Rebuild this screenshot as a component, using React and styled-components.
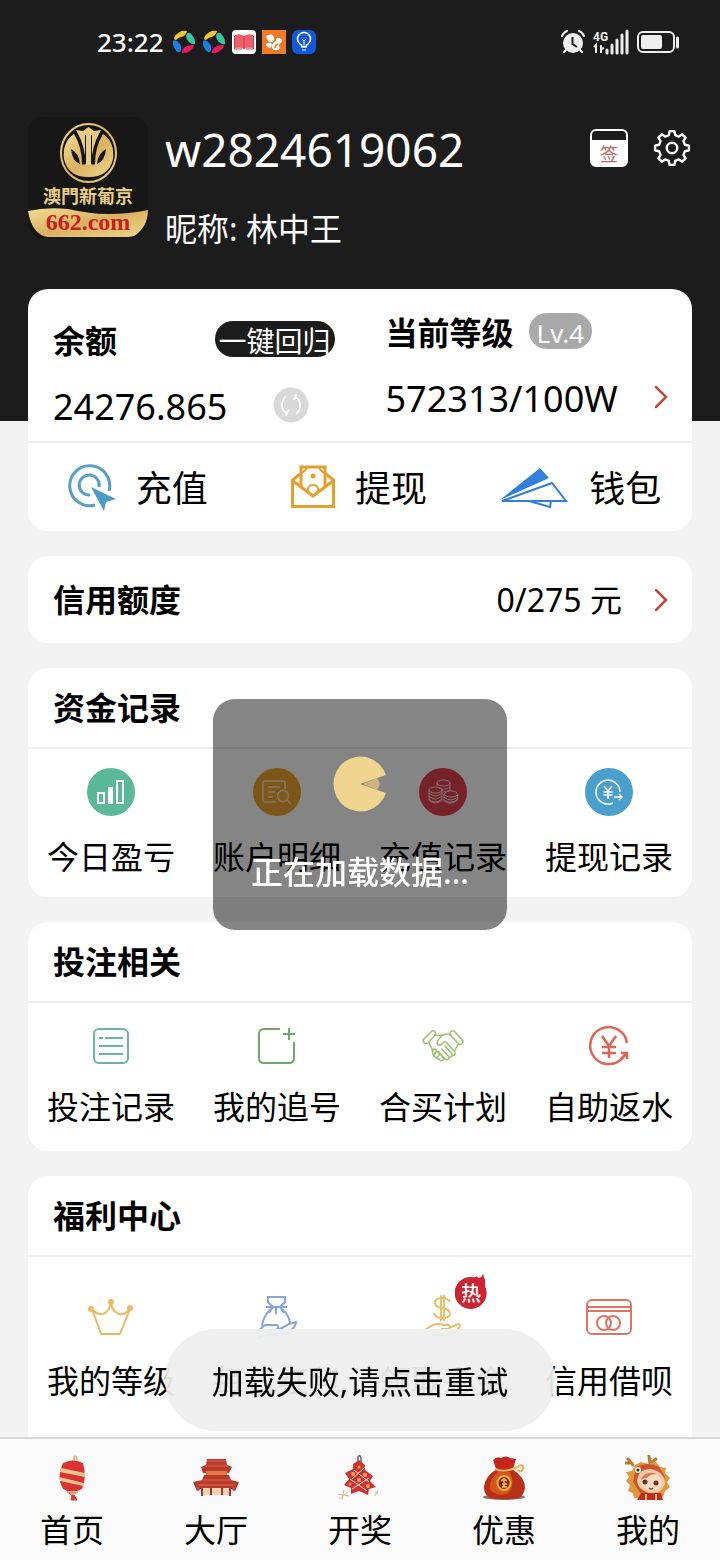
import React, { useState } from 'react';
import styled, { createGlobalStyle } from 'styled-components';

const GlobalStyle = createGlobalStyle`
  * {
    box-sizing: border-box;
  }

  body {
    margin: 0;
    background: #f3f3f3;
    color: #000;
    font-family: "Noto Sans", "Noto Sans CJK SC", sans-serif;
    font-size: 32px;
    line-height: 32px;
  }

  button {
    padding: 0;
    border: none;
    background: none;
    color: inherit;
    font: inherit;
    cursor: pointer;
  }

  a {
    color: inherit;
    text-decoration: none;
  }

  svg {
    display: block;
    flex: none;
  }
`;

const Screen = styled.div`
  display: flex;
  flex-direction: column;
  height: 100vh;
  overflow: hidden;
`;

const Header = styled.header`
  flex: none;
  padding-bottom: 176px;
  background: #1c1c1c;
  color: #fff;
`;

const StatusBar = styled.div`
  display: flex;
  justify-content: space-between;
  align-items: center;
  height: 84px;
  padding: 0 41px 0 97px;
`;

const StatusGroup = styled.div`
  display: flex;
  align-items: center;
  gap: ${(p) => p.$gap}px;
`;

const Clock = styled.time`
  margin-right: 2px;
  font-size: 26px;
  font-weight: 500;
`;

const Profile = styled.div`
  display: flex;
  align-items: flex-start;
  gap: 17px;
  padding: 33px 28px 0;
`;

const ProfileText = styled.div`
  flex: 1;
  min-width: 0;
  padding-top: 4px;
`;

const UserName = styled.h1`
  margin: 0 0 36px;
  font-size: 46px;
  font-weight: 400;
  line-height: 56px;
`;

const Nickname = styled.p`
  margin: 0;
`;

const HeaderTools = styled.div`
  display: flex;
  gap: 24px;
  padding-top: 12px;
`;

const SignButton = styled.button`
  width: 38px;
  height: 38px;
  padding-top: 12px;
  border: 2px solid #fff;
  border-radius: 6px;
  background: linear-gradient(#1c1c1c 9px, #fff 9px);
  color: #c0655a;
  font-size: 18px;
  line-height: 22px;
`;

const Main = styled.main`
  display: flex;
  flex: 1;
  flex-direction: column;
  gap: 25px;
  min-height: 0;
  margin-top: -132px;
  padding: 0 28px;
  overflow: hidden;
`;

const Card = styled.section`
  flex: none;
  border-radius: 20px;
  background: #fff;
`;

const Title = styled.h2`
  margin: 0;
  font-size: 32px;
  font-weight: 700;
`;

const Summary = styled.div`
  display: grid;
  grid-template-columns: minmax(0, 7fr) minmax(0, 6fr);
  height: 154px;
  border-bottom: 2px solid #eee;
`;

const BalanceColumn = styled.div`
  padding: 32px 51px 0 25px;
`;

const LevelColumn = styled.div`
  padding: 24px 24px 0 0;
`;

const SummaryRow = styled.div`
  display: flex;
  align-items: center;
  justify-content: ${(p) => (p.$start ? 'flex-start' : 'space-between')};
  gap: 15px;
  height: 36px;

  & + & {
    margin-top: 30px;
  }

  h2 {
    padding-top: 4px;
  }
`;

const Amount = styled.span`
  padding-top: 4px;
  font-size: 36px;
  line-height: 36px;
`;

const ReturnButton = styled.button`
  width: 120px;
  height: 36px;
  padding-top: 4px;
  border-radius: 18px;
  background: #1c1c1c;
  color: #fff;
  font-size: 28px;
  line-height: 32px;
  white-space: nowrap;
`;

const RefreshButton = styled.button`
  margin-right: 26px;
`;

const LevelBadge = styled.span`
  height: 36px;
  padding: 4px 8px 0;
  border-radius: 18px;
  background: #a9a9a9;
  color: #fff;
  font-size: 26px;
  line-height: 32px;
`;

const Actions = styled.div`
  display: grid;
  grid-template-columns: repeat(3, 1fr);
  height: 88px;
`;

const ActionButton = styled.button`
  display: flex;
  align-items: center;
  justify-content: center;
  gap: 20px;
  padding-right: 2px;
  font-size: 36px;
  line-height: 36px;

  span {
    padding-top: 4px;
  }
`;

const CreditRow = styled.a`
  display: flex;
  align-items: center;
  height: 87px;
  padding: 0 24px 0 25px;
`;

const CreditValue = styled.span`
  margin: 0 32px 0 auto;
`;

const CardHead = styled.div`
  display: flex;
  align-items: center;
  height: 81px;
  padding-left: 25px;
  border-bottom: 2px solid #eee;
`;

const CellGrid = styled.div`
  display: grid;
  grid-template-columns: repeat(4, 1fr);
`;

const Cell = styled.button`
  position: relative;
  display: flex;
  flex-direction: column;
  align-items: center;
  gap: ${(p) => p.$gap}px;
  padding: ${(p) => p.$top}px 0 ${(p) => p.$bottom}px;
  white-space: nowrap;
`;

const IconDisc = styled.span`
  display: grid;
  place-items: center;
  width: 48px;
  height: 48px;
  border-radius: 50%;
  background: ${(p) => p.$color};
`;

const HotBadge = styled.span`
  position: absolute;
  top: 17px;
  left: 95px;
  display: grid;
  justify-items: center;
  color: #fff;
  font-size: 20px;
  font-weight: 500;
  line-height: 20px;

  svg,
  span {
    grid-area: 1 / 1;
  }

  span {
    padding-top: 10px;
  }
`;

const TabBar = styled.nav`
  display: grid;
  flex: none;
  grid-template-columns: repeat(5, 1fr);
  height: 123px;
  border-top: 2px solid #d8d8d8;
  background: #fafafa;
`;

const Tab = styled.a`
  display: flex;
  flex-direction: column;
  align-items: center;
  gap: 13px;
  padding-top: 16px;
`;

const LoadingLayer = styled.div`
  position: fixed;
  inset: 0;
  display: flex;
  align-items: center;
  justify-content: center;
  padding-top: 69px;
  pointer-events: none;
`;

const LoadingBox = styled.div`
  display: flex;
  flex-direction: column;
  align-items: center;
  gap: 44px;
  width: 294px;
  height: 231px;
  padding-top: 57px;
  border-radius: 22px;
  background: rgba(0, 0, 0, 0.48);
  color: #fff;
  font-weight: 500;
  white-space: nowrap;
`;

const ToastLayer = styled.div`
  position: fixed;
  right: 0;
  bottom: 129px;
  left: 0;
  display: flex;
  justify-content: center;
`;

const Toast = styled.button`
  height: 102px;
  padding: 4px 47px 0;
  border-radius: 51px;
  background: rgba(238, 238, 238, 0.94);
  white-space: nowrap;
`;

/* ---- status bar icons ---- */

const Swirl = () => (
  <svg width="24" height="24" viewBox="0 0 24 24">
    <path d="M2 8 A11.500 11.500 0 0 1 15 1 Q14 6 9 7 Q6 8 4 10 Q2 10 2 8Z" fill="#f5c52c" />
    <path d="M16 3 Q18 2 20 5 A11.500 11.500 0 0 1 23 14 Q20 15 17 12 Q14 9 14 6 Q14 4 16 3Z" fill="#3cc79a" />
    <path d="M22 16 A11.500 11.500 0 0 1 10 23 Q9 20 13 17 Q17 15 20 15 Q22 15 22 16Z" fill="#ea1a5c" />
    <path d="M1 11 Q4 9 7 13 Q10 16 9 20 Q8 23 6 22 A11.500 11.500 0 0 1 1 11Z" fill="#1b7fe6" />
  </svg>
);

const BookIcon = () => (
  <svg width="24" height="24" viewBox="0 0 24 24">
    <rect width="24" height="24" rx="4" fill="#fff" />
    <path d="M3 5 Q8 3 12 6 Q16 3 21 5 L21 18 Q15 17 12 19 Q9 17 3 18Z" fill="#f0606a" />
    <path d="M12 6 V19 M2.500 6 V19 H10 M21.500 6 V19 H14" fill="none" stroke="#b8434f" strokeWidth="1" />
  </svg>
);

const SquirrelIcon = () => (
  <svg width="24" height="24" viewBox="0 0 24 24">
    <rect width="24" height="24" fill="#f07a26" />
    <path d="M5 9 Q3 5 7 5 Q11 3 12 8 Q13 11 10 12 Q6 12 5 9Z" fill="#fff" />
    <path d="M11 20 Q8 14 14 11 Q14 7 17 8 Q21 9 20 12 Q17 13 17 15 Q18 18 17 20Z" fill="#fff" />
    <path d="M4 14 Q7 11 10 14 Q10 17 8 18 Q4 17 4 14Z" fill="#fff" />
    <path d="M13 18 Q13 15 16 14" fill="none" stroke="#f07a26" strokeWidth="1.500" />
  </svg>
);

const BulbIcon = () => (
  <svg width="24" height="24" viewBox="0 0 24 24" fill="none" stroke="#fff" strokeWidth="1.500">
    <rect width="24" height="24" rx="6" fill="#1258d8" stroke="none" />
    <path d="M10 17 Q10 15 8 14 A6.500 6.500 0 1 1 16 14 Q14 15 14 17Z" />
    <path d="M10 20 H14 M12 17 V11 M10 9 L12 11 L14 9" strokeWidth="1" />
  </svg>
);

const AlarmIcon = () => (
  <svg width="24" height="24" viewBox="0 0 24 24">
    <circle cx="12" cy="13" r="10" fill="#eee" />
    <path d="M1 6 Q3 2 6 1 M18 1 Q21 2 23 6 M5 20 L3 22 M19 20 L21 22" stroke="#eee" strokeWidth="2" fill="none" strokeLinecap="round" />
    <path d="M11.500 7 V14 L16 17" stroke="#1c1c1c" strokeWidth="2" fill="none" />
  </svg>
);

const SignalIcon = () => (
  <svg width="36" height="26" viewBox="0 0 36 26">
    <text x="0" y="12" fill="#eee" fontSize="12" fontWeight="700" fontFamily="Roboto, sans-serif">4G</text>
    <path d="M1 18 L3 16 V24 M8 16 V24 M8 20 L11 19" stroke="#eee" strokeWidth="2" fill="none" />
    <path d="M14 21 V24 M19 16 V24 M24 11 V24 M29 6 V24 M34 2 V24" stroke="#eee" strokeWidth="3" strokeLinecap="round" />
  </svg>
);

const BatteryIcon = () => (
  <svg width="42" height="24" viewBox="0 0 42 24">
    <rect x="1" y="2" width="36" height="20" rx="5" fill="none" stroke="#eee" strokeWidth="2" />
    <rect x="4" y="5" width="21" height="14" rx="2" fill="#eee" />
    <path d="M40.500 8 V17" stroke="#eee" strokeWidth="3" strokeLinecap="round" />
  </svg>
);

/* ---- header ---- */

const Avatar = () => (
  <svg width="120" height="120" viewBox="0 0 120 120">
    <defs>
      <linearGradient id="gold" x1="0" y1="0" x2="1" y2="1">
        <stop offset="0" stopColor="#f3dc96" />
        <stop offset="0.500" stopColor="#d9b262" />
        <stop offset="1" stopColor="#f1d78c" />
      </linearGradient>
    </defs>
    <rect width="120" height="120" rx="14" fill="#171717" />
    <ellipse cx="60.500" cy="36" rx="27.500" ry="29" fill="none" stroke="url(#gold)" strokeWidth="2" />
    <path
      d="M46 17 Q34 25 36 42 Q40 60 60.500 60 Q81 60 85 42 Q87 25 75 17 Q67 30 67 47 H54 Q54 30 46 17Z"
      fill="url(#gold)"
    />
    <path d="M60.500 10 L66 14 L73 13 Q63 30 63.500 48 H57.500 Q58 30 48 13 L55 14Z" fill="#e9cd86" />
    <path d="M54 47 H57.500 V18 M67 47 H63.500 V18" fill="none" stroke="#171717" strokeWidth="1" />
    <path d="M43 32 Q51 36 52 47 Q44 44 43 32Z M78 32 Q70 36 69 47 Q77 44 78 32Z" fill="#171717" />
    <text x="60" y="86" textAnchor="middle" fill="#e8cd86" fontSize="18" fontWeight="700" fontFamily="Noto Sans CJK TC, sans-serif">
      澳門新葡京
    </text>
    <path d="M0 94 Q18 90 40 92 Q62 97 80 97 Q102 97 120 93 Q120 110 106 119 L100 120 H20 Q4 118 0 94Z" fill="url(#gold)" />
    <text x="60" y="113" textAnchor="middle" fill="#c8201c" fontSize="24" fontWeight="700" fontFamily="Liberation Serif, serif">
      662.com
    </text>
  </svg>
);

// outline of an eight-toothed gear round (20, 20)
const gearPath = () => {
  const points = [];
  for (let i = 0; i < 8; i += 1) {
    [[-14, 14], [-8, 18], [8, 18], [14, 14]].forEach(([offset, r]) => {
      const a = ((i * 45 - 90 + offset) * Math.PI) / 180;
      points.push(`${(20 + r * Math.cos(a)).toFixed(2)} ${(20 + r * Math.sin(a)).toFixed(2)}`);
    });
  }
  return `M${points.join(' L')}Z`;
};

const GearIcon = () => (
  <svg width="40" height="38" viewBox="0 0 40 40" fill="none" stroke="#fff" strokeWidth="2.500" strokeLinejoin="round">
    <path d={gearPath()} />
    <circle cx="20" cy="20" r="5.500" />
  </svg>
);

/* ---- cards ---- */

const Chevron = () => (
  <svg width="14" height="24" viewBox="0 0 14 24">
    <path d="M2 2 L12 12 L2 22" fill="none" stroke="#bd4b3b" strokeWidth="2.500" strokeLinecap="round" />
  </svg>
);

const RefreshIcon = () => (
  <svg width="36" height="36" viewBox="0 0 36 36">
    <circle cx="18" cy="18" r="17.500" fill="#d9d9d9" />
    <path
      d="M13 26 Q8 22 9 16 Q10 12 13 9 M15 27 Q9 25 9 18 M13 26 L16 23 M13 26 V29 M23 10 Q28 14 27 20 Q26 25 23 27 M21 9 Q27 11 27 18 M23 10 L20 13 M23 10 V7"
      fill="none"
      stroke="#fff"
      strokeWidth="1.500"
    />
  </svg>
);

const RechargeIcon = () => (
  <svg width="48" height="48" viewBox="0 0 48 48" fill="none" stroke="#5a9fc4" strokeWidth="3">
    <path d="M27 42 A20 20 0 1 1 41 28" />
    <path d="M22 32 A10 10 0 1 1 31 24" />
    <path d="M23 24 L48 36 L38 39 L36 48Z" fill="#4a9cc7" stroke="none" />
  </svg>
);

const WithdrawIcon = () => (
  <svg width="44" height="44" viewBox="0 0 44 44" fill="none" stroke="#e3a02f" strokeWidth="3">
    <path d="M10 22 V2 H34 V22" />
    <path d="M16 2 Q15 6 10 8 M28 2 Q29 6 34 8" strokeWidth="2" />
    <path d="M9 9 L1.500 15 V41.500 H42.500 V15 L35 9" />
    <path d="M2 16 L22 31 L42 16" />
    <path d="M17 27 Q16 20 22 20 Q28 20 27 27 L22 31Z" strokeWidth="2" />
    <circle cx="22" cy="11" r="2.500" fill="#e3a02f" stroke="none" />
  </svg>
);

const WalletIcon = () => (
  <svg width="70" height="44" viewBox="0 0 70 44" fill="none" stroke="#2f80dc" strokeWidth="2">
    <path d="M1 35 L41 3 L50 13Z" fill="#2f80dc" stroke="none" />
    <path d="M3 36 L53 18 L67 36Z" />
    <path d="M30 36 L51 42 L52 36" />
  </svg>
);

const BarsIcon = () => (
  <svg width="28" height="26" viewBox="0 0 28 26" fill="none" stroke="#fff" strokeWidth="2">
    <rect x="1" y="14" width="6" height="10" />
    <rect x="11" y="8" width="5" height="17" fill="#fff" stroke="none" />
    <rect x="20" y="2" width="6" height="22" />
  </svg>
);

const DetailIcon = () => (
  <svg width="30" height="26" viewBox="0 0 30 26" fill="none" stroke="#f6e3c5" strokeWidth="1.500">
    <path d="M14 23 H3 Q1 23 1 21 V4 Q1 2 3 2 H21 Q23 2 23 4 V10 M6 8 H18 M6 13 H13 M6 18 H11" />
    <circle cx="21" cy="17" r="5.500" />
    <path d="M25 21 L29 25" />
  </svg>
);

const CoinsIcon = () => (
  <svg width="30" height="26" viewBox="0 0 30 26" fill="none" stroke="#f6d8dc" strokeWidth="1">
    <path d="M9 7 V4 M22 4 V12" />
    <ellipse cx="15.500" cy="4" rx="6.500" ry="3" />
    <path d="M11 9 Q16 12 22 8 M15 13 Q19 13 22 11" />
    <ellipse cx="7.500" cy="11" rx="6.500" ry="3" />
    <path d="M1 11 V21 Q7 27 14 21 V11 M1 14 Q7 20 14 14 M1 17 Q7 23 14 17 M1 20 Q7 26 14 20" />
    <ellipse cx="23" cy="15" rx="6.500" ry="3" />
    <path d="M16 15 V22 Q23 27 29.500 21 V15 M16 18 Q23 24 29.500 18 M16 21 Q23 26 29.500 20" />
  </svg>
);

const YenOutIcon = () => (
  <svg width="28" height="28" viewBox="0 0 28 28" fill="none" stroke="#fff" strokeWidth="1.500">
    <path d="M18 25 A12 12 0 1 1 25 14" />
    <path d="M9 8 L13 13 L17 8 M13 13 V21 M8.500 14 H17.500 M8.500 17 H17.500 M19 19 H27 M24 16 L27 19 L24 22" />
  </svg>
);

const BetListIcon = () => (
  <svg width="48" height="48" viewBox="0 0 48 48" fill="none" stroke="#6cb3a6" strokeWidth="2">
    <rect x="7" y="7" width="34" height="34" rx="5" />
    <path d="M12 16 H16 M18 16 H36 M12 24 H36 M12 32 H36" />
  </svg>
);

const ChaseIcon = () => (
  <svg width="48" height="48" viewBox="0 0 48 48" fill="none" stroke="#6fa968" strokeWidth="2">
    <path d="M27 7 H11 Q6 7 6 12 V36 Q6 41 11 41 H36 Q41 41 41 36 V20" />
    <path d="M36 6 V18 M30 12 H42" />
  </svg>
);

const HandshakeIcon = () => (
  <svg width="48" height="48" viewBox="0 0 48 48" fill="none" stroke="#9dbf72" strokeWidth="1.500" strokeLinejoin="round" strokeLinecap="round">
    <path d="M4 18 L13 9 Q16 8 17 12 L9 21 Q5 23 4 18Z M31 11 Q33 7 36 10 L44 19 Q44 23 40 22 L31 13Z" />
    <path d="M16 13 Q19 14 24 13 Q28 11 32 13 M39 22 L36 28" />
    <path d="M24 13 Q18 18 18 22 Q21 25 25 20 L27 20 L36 30 Q37 34 33 33" />
    <path d="M26 24 L33 32 Q34 36 30 35 L23 27 M30 35 Q30 39 26 37 L20 30" />
    <path d="M10 21 L14 29 M14 31 Q12 28 15 27 Q18 27 17 30 Q21 29 20 33 Q24 32 23 35 Q26 36 24 38 Q22 40 20 37 Q18 38 17 35 Q14 35 14 31Z M17 30 L15 33 M20 33 L18 36" />
  </svg>
);

const RebateIcon = () => (
  <svg width="48" height="48" viewBox="0 0 48 48" fill="none" stroke="#dd6555" strokeWidth="2.500">
    <path d="M42 21 A18.500 18.500 0 1 0 39 34" />
    <path d="M36 31 L42 31 V37 M36 37 L42 31" />
    <path d="M17 14 L24 24 L31 14 M24 24 V36 M17 25 H31 M17 31 H31" />
  </svg>
);

const CrownIcon = () => (
  <svg width="48" height="48" viewBox="0 0 48 48" fill="none" stroke="#eeb862" strokeWidth="2" strokeLinejoin="round">
    <path d="M5 16 L14 41 H33 L43 16 Q36 24 30 20 Q25 17 24 10 Q22 18 18 20 Q12 24 5 16Z" />
    <g fill="#eeb862" stroke="none">
      <circle cx="4" cy="16" r="3" />
      <circle cx="24" cy="9" r="3" />
      <circle cx="43" cy="15" r="3" />
    </g>
  </svg>
);

const MoneyBagIcon = () => (
  <svg width="48" height="48" viewBox="0 0 48 48" fill="none" stroke="#86a5de" strokeWidth="2">
    <path d="M15 4 H32 V9 L27 14 H20 L15 9 V4Z M13 14 H34 M20 14 L16 20 M23 14 V21 M27 14 L31 20" />
    <path d="M18 16 Q10 23 9 33 M29 16 Q36 22 37 30" />
    <path d="M4 39 L12 32 H24 Q27 34 23 37 H17 M25 37 L36 31 L43 29 Q43 34 34 41 L14 42 L4 45" />
  </svg>
);

const LoanIcon = () => (
  <svg width="48" height="48" viewBox="0 0 48 48" fill="none" stroke="#e7bf6d" strokeWidth="2">
    <path d="M31 9 Q29 5 23 5 Q16 5 16 10 Q16 14 23 15 Q31 16 31 21 Q31 25 23 25 Q16 25 15 20 M22 2 V28 M25 2 V28" />
    <path d="M6 37 L14 32 Q20 30 24 32 H30 Q33 35 28 36 H22 M30 35 L39 31 Q43 31 39 36 L30 42 H12" />
  </svg>
);

const CreditCardIcon = () => (
  <svg width="48" height="48" viewBox="0 0 48 48" fill="none" stroke="#df7463" strokeWidth="2">
    <rect x="2" y="7" width="44" height="34" rx="5" />
    <path d="M2 14 H46 M2 18 H46" />
    <circle cx="19" cy="30" r="7" />
    <circle cx="28" cy="30" r="7" />
  </svg>
);

const HotFlame = () => (
  <svg width="32" height="36" viewBox="0 0 32 36">
    <path d="M16 3 Q22 4 21 2 L24 4 Q27 3 28 0 L30 6 Q30 10 30 12 A16 16 0 1 1 16 3Z" fill="#cc2430" />
  </svg>
);

/* ---- bottom tabs ---- */

const LanternIcon = () => (
  <svg width="46" height="46" viewBox="0 0 46 46">
    <path d="M25 7 V2 Q27 0 28 4 V7" fill="none" stroke="#e0b070" strokeWidth="1.500" />
    <path d="M14 8 Q24 3 34 8 Q38 22 33 34 Q23 39 14 34 Q7 22 14 8Z" fill="#d93432" />
    <path d="M12 13 L36 18 V22 L11 17Z M10 22 L35 28 V31 L11 26Z" fill="#f5c493" />
    <path d="M18 37 Q24 39 29 37" stroke="#e0a060" strokeWidth="2" fill="none" />
    <path d="M20 38 L25 42 M23 40 L22 45 L28 45 L25 40Z" fill="#d93a40" stroke="#d93a40" />
  </svg>
);

const PagodaIcon = () => (
  <svg width="46" height="46" viewBox="0 0 46 46">
    <path d="M14 4 H33 L34 10 L39 12 L36 18 H10 L8 12 L13 10Z M11 20 H36 L38 25 L46 27 L43 34 H3 L0 27 L9 25Z" fill="#b83a2c" />
    <path d="M13 16 H34 V20 H13Z" fill="#e27b3c" />
    <path d="M14 6 H33 M12 11 H35 M9 25 H38 M5 30 H42" stroke="#d96a4a" strokeWidth="1" />
    <rect x="8" y="33" width="30" height="7" fill="#f6d3b2" />
    <path d="M9 33 V41 M18 33 V40 M29 33 V40 M37 33 V41" stroke="#a93428" strokeWidth="2" />
    <circle cx="5" cy="34" r="2" fill="#c8485a" />
    <circle cx="41" cy="34" r="2" fill="#c8485a" />
  </svg>
);

const FirecrackerIcon = () => (
  <svg width="46" height="46" viewBox="0 0 46 46">
    <path d="M21 7 V2 Q23 -1 24 3 V8" fill="none" stroke="#5d6285" strokeWidth="1.500" />
    <path d="M22 5 L28 10 L28 15 L36 21 L33 26 L39 32 L32 34 L31 40 L22 36 L14 39 L14 33 L7 30 L12 24 L8 18 L16 14 L16 9Z" fill="#cd3431" />
    <path d="M28 12 L15 24 M17 15 L32 27 M13 24 L30 36 M32 23 L15 34" stroke="#f8e0d4" strokeWidth="1" />
    <g fill="#f1a25b">
      <circle cx="22" cy="12" r="1.500" />
      <circle cx="16" cy="19" r="2" />
      <circle cx="28" cy="20" r="2" />
      <circle cx="22" cy="25" r="2" />
      <circle cx="13" cy="29" r="1.500" />
      <circle cx="31" cy="31" r="2" />
    </g>
    <path d="M1 39 L12 41 M7 35 L5 45 M2 44 L11 37 M38 37 L41 38 M38 41 L41 35" stroke="#d9b9a3" strokeWidth="1" />
  </svg>
);

const FortuneBagIcon = () => (
  <svg width="46" height="46" viewBox="0 0 46 46">
    <ellipse cx="23" cy="42" rx="21" ry="3" fill="#8a7468" />
    <path d="M12 5 Q16 1 20 3 Q25 0 29 3 L35 4 L32 14 H15Z" fill="#c5261b" />
    <path d="M16 14 H31 Q44 22 44 33 Q43 43 33 44 H14 Q3 43 3 32 Q4 21 16 14Z" fill="#b9301a" />
    <path d="M17 17 Q8 24 9 34 Q15 42 26 39 Q35 31 29 17Z" fill="#e0661c" opacity="0.700" />
    <path d="M14 14 Q23 18 34 13 M34 14 Q42 7 42 13 Q41 19 36 15" fill="none" stroke="#e8b35c" strokeWidth="2" />
    <ellipse cx="23" cy="28" rx="6.500" ry="7" fill="#8a2412" stroke="#f0b23b" strokeWidth="2" />
    <path d="M20 26 L23 24 L26 26 M21 29 H26 M21 32 H26 M23 24 V32" stroke="#f3c04c" strokeWidth="1.500" fill="none" />
  </svg>
);

const DragonIcon = () => (
  <svg width="46" height="46" viewBox="0 0 46 46">
    <path d="M8 10 L3 4 M6 8 L1 8 M25 9 L24 1 M27 7 L31 4" stroke="#b97a30" strokeWidth="3" strokeLinecap="round" />
    <path d="M10 10 L16 7 L24 9 L31 7 L35 12 L41 13 L40 18 L45 23 L42 27 L45 32 L40 36 L38 42 L9 43 L8 38 L3 36 L5 30 L1 26 L4 22 L1 17 L7 16Z" fill="#e0973a" />
    <path d="M11 12 Q23 6 34 12 L40 22 L38 33 L16 39 L8 27Z" fill="#c9542d" />
    <path d="M12 25 Q14 13 26 14 Q40 17 40 29 Q36 39 26 38 Q13 36 12 25Z" fill="#f3c7a8" />
    <path d="M16 26 Q20 18 28 18 Q37 21 37 30 Q33 36 26 36 Q17 34 16 26Z" fill="#f9dcc2" />
    <path d="M16 25 Q20 15 32 19 Q25 19 22 23 Q18 23 16 25Z" fill="#d97a55" />
    <circle cx="20" cy="27" r="2.500" fill="#6b3022" />
    <circle cx="31" cy="28" r="2.500" fill="#6b3022" />
    <circle cx="13" cy="15" r="3" fill="#fff" />
    <circle cx="13" cy="15" r="1.500" fill="#332018" />
    <path d="M24 33 Q26 35 28 33" stroke="#c12f2b" strokeWidth="1.500" fill="none" />
    <path d="M16 38 H36 L38 45 H12Z" fill="#bd2b21" />
    <path d="M21 39 V45 M31 39 V45" stroke="#efbd55" strokeWidth="2" />
  </svg>
);

const Pacman = () => (
  <svg width="54" height="56" viewBox="0 0 54 56">
    <path d="M30 28 L44 22 Q49 28 44 34Z" fill="#ccb67f" />
    <path d="M53 19 A27 27.500 0 1 0 53 37 L27 28Z" fill="#efd590" />
  </svg>
);

const actions = [
  { label: '充值', icon: <RechargeIcon /> },
  { label: '提现', icon: <WithdrawIcon /> },
  { label: '钱包', icon: <WalletIcon /> },
];

const sections = [
  {
    title: '资金记录',
    top: 19,
    gap: 25,
    bottom: 24,
    items: [
      { label: '今日盈亏', icon: <BarsIcon />, disc: '#5bb898' },
      { label: '账户明细', icon: <DetailIcon />, disc: '#f0a830' },
      { label: '充值记录', icon: <CoinsIcon />, disc: '#e5404f' },
      { label: '提现记录', icon: <YenOutIcon />, disc: '#4a9fcc' },
    ],
  },
  {
    title: '投注相关',
    top: 19,
    gap: 21,
    bottom: 28,
    items: [
      { label: '投注记录', icon: <BetListIcon /> },
      { label: '我的追号', icon: <ChaseIcon /> },
      { label: '合买计划', icon: <HandshakeIcon /> },
      { label: '自助返水', icon: <RebateIcon /> },
    ],
  },
  {
    title: '福利中心',
    top: 36,
    gap: 24,
    bottom: 60,
    items: [
      { label: '我的等级', icon: <CrownIcon /> },
      { label: '每日红包', icon: <MoneyBagIcon /> },
      { label: '领取彩金', icon: <LoanIcon />, hot: true },
      { label: '信用借呗', icon: <CreditCardIcon /> },
    ],
  },
];

const tabs = [
  { label: '首页', icon: <LanternIcon /> },
  { label: '大厅', icon: <PagodaIcon /> },
  { label: '开奖', icon: <FirecrackerIcon /> },
  { label: '优惠', icon: <FortuneBagIcon /> },
  { label: '我的', icon: <DragonIcon /> },
];

const MenuSection = ({ section }) => (
  <Card>
    <CardHead>
      <Title>{section.title}</Title>
    </CardHead>
    <CellGrid>
      {section.items.map((item) => (
        <Cell key={item.label} type="button" $top={section.top} $gap={section.gap} $bottom={section.bottom}>
          {item.disc ? <IconDisc $color={item.disc}>{item.icon}</IconDisc> : item.icon}
          <span>{item.label}</span>
          {item.hot && (
            <HotBadge>
              <HotFlame />
              <span>热</span>
            </HotBadge>
          )}
        </Cell>
      ))}
    </CellGrid>
  </Card>
);

const App = () => {
  const [loading, setLoading] = useState(true);
  const [failed, setFailed] = useState(true);

  const handleRetry = () => {
    setFailed(false);
    setLoading(true);
  };

  const handleRefresh = () => setLoading(!loading);

  return (
    <Screen>
      <GlobalStyle />
      <Header>
        <StatusBar>
          <StatusGroup $gap={6}>
            <Clock>23:22</Clock>
            <Swirl />
            <Swirl />
            <BookIcon />
            <SquirrelIcon />
            <BulbIcon />
          </StatusGroup>
          <StatusGroup $gap={8}>
            <AlarmIcon />
            <SignalIcon />
            <BatteryIcon />
          </StatusGroup>
        </StatusBar>
        <Profile>
          <Avatar />
          <ProfileText>
            <UserName>w2824619062</UserName>
            <Nickname>昵称: 林中王</Nickname>
          </ProfileText>
          <HeaderTools>
            <SignButton type="button">签</SignButton>
            <button type="button" aria-label="设置">
              <GearIcon />
            </button>
          </HeaderTools>
        </Profile>
      </Header>

      <Main>
        <Card>
          <Summary>
            <BalanceColumn>
              <SummaryRow>
                <Title>余额</Title>
                <ReturnButton type="button">一键回归</ReturnButton>
              </SummaryRow>
              <SummaryRow>
                <Amount>24276.865</Amount>
                <RefreshButton type="button" aria-label="刷新" onClick={handleRefresh}>
                  <RefreshIcon />
                </RefreshButton>
              </SummaryRow>
            </BalanceColumn>
            <LevelColumn>
              <SummaryRow $start>
                <Title>当前等级</Title>
                <LevelBadge>Lv.4</LevelBadge>
              </SummaryRow>
              <SummaryRow>
                <Amount>572313/100W</Amount>
                <Chevron />
              </SummaryRow>
            </LevelColumn>
          </Summary>
          <Actions>
            {actions.map((action) => (
              <ActionButton key={action.label} type="button">
                {action.icon}
                <span>{action.label}</span>
              </ActionButton>
            ))}
          </Actions>
        </Card>

        <Card>
          <CreditRow href="#credit">
            <Title>信用额度</Title>
            <CreditValue>0/275 元</CreditValue>
            <Chevron />
          </CreditRow>
        </Card>

        {sections.map((section) => (
          <MenuSection key={section.title} section={section} />
        ))}
      </Main>

      <TabBar>
        {tabs.map((tab) => (
          <Tab key={tab.label} href={`#${tab.label}`}>
            {tab.icon}
            <span>{tab.label}</span>
          </Tab>
        ))}
      </TabBar>

      {loading && (
        <LoadingLayer>
          <LoadingBox role="status">
            <Pacman />
            <span>正在加载数据...</span>
          </LoadingBox>
        </LoadingLayer>
      )}

      {failed && (
        <ToastLayer>
          <Toast type="button" onClick={handleRetry}>加载失败,请点击重试</Toast>
        </ToastLayer>
      )}
    </Screen>
  );
};

export default App;
